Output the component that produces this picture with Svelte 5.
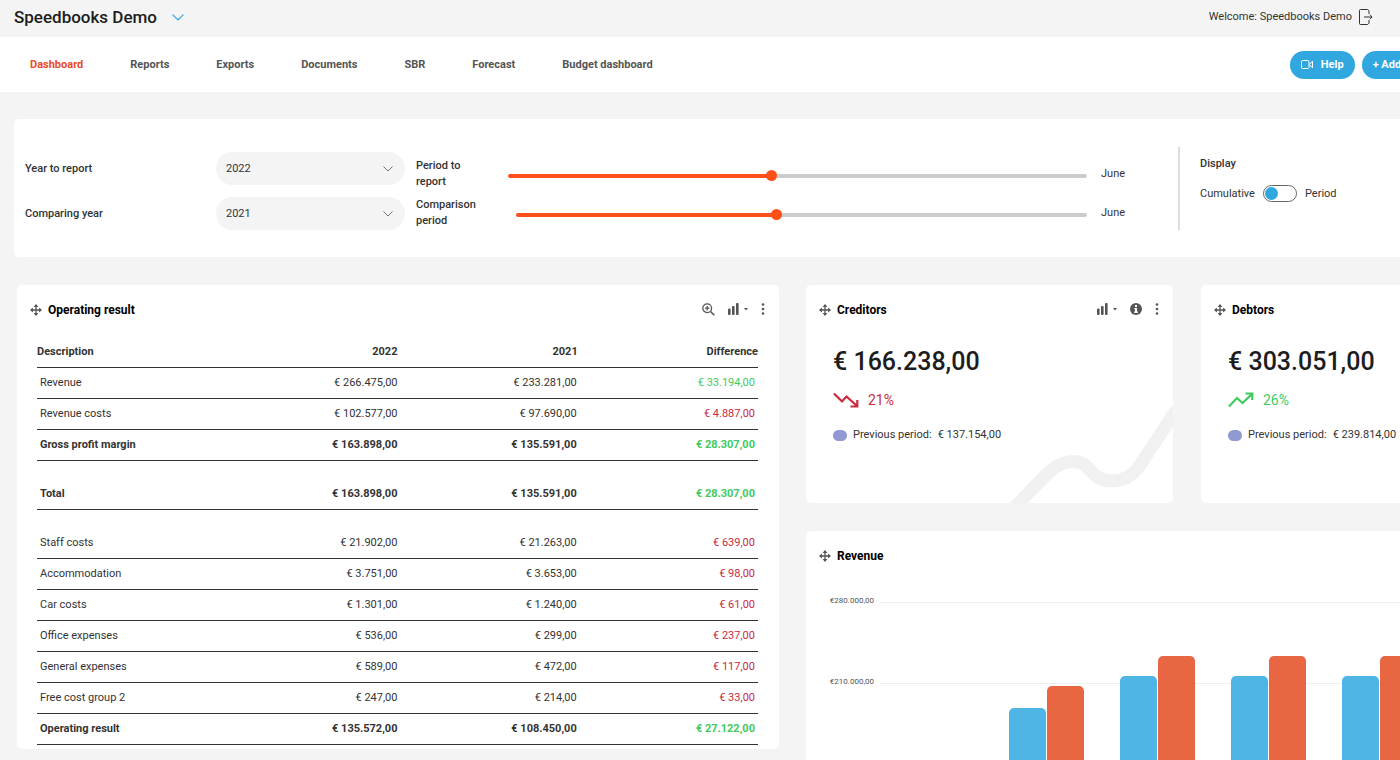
<script>
  let yearToReport = $state('2022');
  let comparingYear = $state('2021');
  let showPeriod = $state(false);

  const navItems = ['Dashboard', 'Reports', 'Exports', 'Documents', 'SBR', 'Forecast', 'Budget dashboard'];
  const years = ['2022', '2021', '2020', '2019'];
  const months = ['January', 'February', 'March', 'April', 'May', 'June', 'July', 'August', 'September', 'October', 'November', 'December'];

  let periods = $state([
    { id: 'report-period', label: 'Period to report', month: 6 },
    { id: 'comparison-period', label: 'Comparison period', month: 6 },
  ]);

  // gap: adds white space above the row
  const rows = [
    { name: 'Revenue', current: '266.475,00', previous: '233.281,00', diff: '33.194,00', good: true },
    { name: 'Revenue costs', current: '102.577,00', previous: '97.690,00', diff: '4.887,00' },
    { name: 'Gross profit margin', current: '163.898,00', previous: '135.591,00', diff: '28.307,00', good: true, bold: true },
    { name: 'Total', current: '163.898,00', previous: '135.591,00', diff: '28.307,00', good: true, bold: true, gap: true },
    { name: 'Staff costs', current: '21.902,00', previous: '21.263,00', diff: '639,00', gap: true },
    { name: 'Accommodation', current: '3.751,00', previous: '3.653,00', diff: '98,00' },
    { name: 'Car costs', current: '1.301,00', previous: '1.240,00', diff: '61,00' },
    { name: 'Office expenses', current: '536,00', previous: '299,00', diff: '237,00' },
    { name: 'General expenses', current: '589,00', previous: '472,00', diff: '117,00' },
    { name: 'Free cost group 2', current: '247,00', previous: '214,00', diff: '33,00' },
    { name: 'Operating result', current: '135.572,00', previous: '108.450,00', diff: '27.122,00', good: true, bold: true },
  ];

  const totals = [
    { title: 'Creditors', amount: '166.238,00', percent: 21, up: false, previous: '137.154,00' },
    { title: 'Debtors', amount: '303.051,00', percent: 26, up: true, previous: '239.814,00' },
  ];

  // Revenue chart, values in thousands
  const chartMax = 280;
  const ticks = ['€280.000,00', '€210.000,00', '€140.000,00', '€70.000,00'];
  const revenue = [
    { previous: 0, current: 0 },
    { previous: 188, current: 207 },
    { previous: 216, current: 233 },
    { previous: 216, current: 233 },
    { previous: 216, current: 233 },
    { previous: 216, current: 233 },
  ];
</script>

{#snippet moveIcon()}
  <svg class="move" width="12" height="12" viewBox="0 0 12 12" aria-hidden="true">
    <path d="M6 1.5v9M1.5 6h9" stroke="currentColor" stroke-width="1.3" />
    <path d="M6 0l2.4 2.9H3.600zM6 12l2.400-2.900H3.600zM0 6l2.900-2.400v4.800zM12 6L9.100 3.600v4.800z" fill="currentColor" />
  </svg>
{/snippet}

{#snippet chartButton()}
  <button class="icon chart-type" aria-label="Chart type">
    <svg width="20" height="12" viewBox="0 0 20 12" fill="currentColor">
      <rect x="0" y="5.5" width="2.600" height="6.5" rx="1" />
      <rect x="4" y="3" width="2.600" height="9" rx="1" />
      <rect x="8" y="0" width="2.600" height="12" rx="1" />
      <path d="M16 5h4l-2 2.4z" />
    </svg>
  </button>
{/snippet}

{#snippet menuButton()}
  <button class="icon" aria-label="More options">
    <svg width="4" height="12" viewBox="0 0 4 12" fill="currentColor">
      <circle cx="2" cy="1.5" r="1.3" />
      <circle cx="2" cy="6" r="1.3" />
      <circle cx="2" cy="10.5" r="1.3" />
    </svg>
  </button>
{/snippet}

<div class="app">
  <header class="topbar">
    <h1>Speedbooks Demo</h1>
    <button class="icon switch-company" aria-label="Switch company">
      <svg width="12" height="7" viewBox="0 0 12 7"><path d="M.6.6L6 6 11.4.6" fill="none" stroke="currentColor" stroke-width="1.2" /></svg>
    </button>
    <span class="welcome">Welcome: Speedbooks Demo</span>
    <button class="icon logout" aria-label="Log out">
      <svg width="14" height="16" viewBox="0 0 14 16" fill="none" stroke="currentColor">
        <path d="M10 5V1.8L8.7.5H1.5a1 1 0 0 0-1 1v13a1 1 0 0 0 1 1h7.2l1.3-1.3V11" />
        <path d="M5 8h8M10.8 5.7L13.1 8l-2.3 2.3" />
      </svg>
    </button>
  </header>

  <div class="page">
    <nav>
      {#each navItems as item, i}
        <a href="#{item}" class:active={i === 0}>{item}</a>
      {/each}
      <div class="actions">
        <button class="pill">
          <svg width="12" height="9" viewBox="0 0 12 9" fill="none" stroke="currentColor">
            <rect x=".5" y=".5" width="7.5" height="8" rx="1.2" />
            <path d="M8.5 4.5l3-3.3v6.6z" stroke-linejoin="round" />
          </svg>
          Help
        </button>
        <button class="pill add">+ Add widget</button>
      </div>
    </nav>

    <section class="filters">
      <div class="years">
        <label for="year">Year to report</label>
        <div class="select">
          <select id="year" bind:value={yearToReport}>
            {#each years as year}<option>{year}</option>{/each}
          </select>
          <svg width="10" height="6" viewBox="0 0 10 6"><path d="M.5.5L5 5 9.5.5" fill="none" stroke="currentColor" /></svg>
        </div>
        <label for="comparing">Comparing year</label>
        <div class="select">
          <select id="comparing" bind:value={comparingYear}>
            {#each years as year}<option>{year}</option>{/each}
          </select>
          <svg width="10" height="6" viewBox="0 0 10 6"><path d="M.5.5L5 5 9.5.5" fill="none" stroke="currentColor" /></svg>
        </div>
      </div>

      <div class="periods">
        {#each periods as period}
          <div class="period">
            <label for={period.id}>{period.label}</label>
            <input
              id={period.id}
              type="range"
              min="1"
              max="12"
              bind:value={period.month}
              style="--fill: {((period.month - 1) / 11) * 100}%"
            />
            <output for={period.id}>{months[period.month - 1]}</output>
          </div>
        {/each}
      </div>

      <div class="display">
        <h2>Display</h2>
        <label class="toggle">
          Cumulative
          <input type="checkbox" bind:checked={showPeriod} />
          Period
        </label>
      </div>
    </section>

    <main>
      <section class="card operating">
        <div class="card-head">
          {@render moveIcon()}
          <h2>Operating result</h2>
          <div class="tools">
            <button class="icon" aria-label="Zoom in">
              <svg width="13" height="13" viewBox="0 0 13 13" fill="none" stroke="currentColor">
                <circle cx="5.2" cy="5.2" r="4.4" stroke-width="1.3" />
                <path d="M8.5 8.5l3.8 3.8" stroke-width="1.6" />
                <path d="M5.2 3v4.4M3 5.2h4.4" stroke-width="1.3" />
              </svg>
            </button>
            {@render chartButton()}
            {@render menuButton()}
          </div>
        </div>
        <table>
          <thead>
            <tr><th>Description</th><th>2022</th><th>2021</th><th>Difference</th></tr>
          </thead>
          <tbody>
            {#each rows as row}
              <tr class:bold={row.bold} class:gap={row.gap}>
                <td>{row.name}</td>
                <td>€ {row.current}</td>
                <td>€ {row.previous}</td>
                <td class={row.good ? 'good' : 'bad'}>€ {row.diff}</td>
              </tr>
            {/each}
          </tbody>
        </table>
      </section>

      <div class="column">
        <div class="totals">
          {#each totals as total}
            <section class="card total">
              <div class="card-head">
                {@render moveIcon()}
                <h2>{total.title}</h2>
                <div class="tools">
                  {@render chartButton()}
                  <button class="icon" aria-label="Information">
                    <svg width="12" height="12" viewBox="0 0 12 12">
                      <circle cx="6" cy="6" r="6" fill="currentColor" />
                      <path d="M5 2h2v2H5zM4.3 5H7v3.6h.8V10H4.2V8.6H5V6.2h-.7z" fill="#fff" />
                    </svg>
                  </button>
                  {@render menuButton()}
                </div>
              </div>
              <div class="total-body">
                <p class="amount">€ {total.amount}</p>
                <p class="trend" class:good={total.up} class:bad={!total.up}>
                  <svg width="26" height="16" viewBox="0 0 26 16" fill="none" stroke="currentColor" stroke-width="2.2">
                    {#if total.up}
                      <path d="M1 14.5L9 6l5.5 5L24 2M17.5 1.5h6.8V8" />
                    {:else}
                      <path d="M1 1.5L9 9.5l4.5-5L24 14M17.5 14.5h6.8V8" />
                    {/if}
                  </svg>
                  {total.percent}%
                </p>
                <p class="previous"><i class="dot"></i>Previous period: <span>€ {total.previous}</span></p>
              </div>
              <svg class="curve" width="168" height="108" viewBox="0 0 168 108" aria-hidden="true">
                <path d="M8 114L43 78C52 69 60 66.500 69 66.500 87 66.500 84 86 107 86 120 86 129 79 135 70L172 14" fill="none" stroke="#f1f1f1" stroke-width="13" />
              </svg>
            </section>
          {/each}
        </div>

        <section class="card">
          <div class="card-head">
            {@render moveIcon()}
            <h2>Revenue</h2>
          </div>
          <div class="chart">
            <div class="axis">
              {#each ticks as tick}<span>{tick}</span>{/each}
            </div>
            <div class="plot">
              {#each revenue as month}
                <div class="group">
                  <div class="bar blue" style="height: {(month.previous / chartMax) * 100}%"></div>
                  <div class="bar orange" style="height: {(month.current / chartMax) * 100}%"></div>
                </div>
              {/each}
            </div>
          </div>
        </section>
      </div>
    </main>
  </div>
</div>

<style>
  :global(body) {
    background: #f4f4f4;
  }

  .app {
    height: 100vh;
    overflow: hidden;
    background: #f4f4f4;
    color: #333;
    font-family: Roboto, "Liberation Sans", sans-serif;
    font-size: 11px;
    line-height: 16px;
  }

  h1, h2, p {
    margin: 0;
  }

  button, select {
    font: inherit;
    color: inherit;
    cursor: pointer;
  }

  .icon {
    display: flex;
    padding: 0;
    border: none;
    background: none;
    color: #555;
  }

  .topbar {
    display: flex;
    align-items: center;
    height: 37px;
    padding: 0 27px 3px 14px;
    box-sizing: border-box;
  }

  h1 {
    color: #1d1d1d;
    font-size: 17px;
    font-weight: 500;
    line-height: 24px;
  }

  .switch-company {
    margin-left: 15px;
    color: #30a8df;
  }

  .welcome {
    margin-left: auto;
  }

  .logout {
    margin-left: 7px;
    color: #333;
  }

  /* the board is wider than the window */
  .page {
    width: calc(100% + 185px);
  }

  nav {
    display: flex;
    align-items: center;
    gap: 47px;
    height: 55px;
    padding-left: 30px;
    background: #fff;
  }

  nav a {
    color: #555;
    font-weight: 700;
    text-decoration: none;
  }

  nav a.active {
    color: #ea4b27;
  }

  .actions {
    display: flex;
    gap: 7px;
    margin-left: auto;
    padding-right: 137px;
  }

  .pill {
    display: flex;
    align-items: center;
    gap: 8px;
    height: 28px;
    padding: 0 11px;
    border: none;
    border-radius: 14px;
    background: #30a8df;
    color: #fff;
    font-weight: 700;
    white-space: nowrap;
  }

  .filters {
    display: flex;
    margin: 27px 14px 0;
    padding: 28px 11px 27px;
    border-radius: 5px;
    background: #fff;
  }

  .filters label, .filters h2 {
    font-size: 11px;
    font-weight: 500;
  }

  .years {
    display: grid;
    grid-template-columns: 191px 189px;
    grid-auto-rows: 33px;
    row-gap: 12px;
    align-items: center;
    padding-top: 5px;
  }

  .select {
    position: relative;
  }

  select {
    width: 100%;
    height: 33px;
    padding: 0 10px;
    border: none;
    border-radius: 17px;
    background: #f4f4f4;
    appearance: none;
  }

  .select svg {
    position: absolute;
    top: 14px;
    right: 12px;
    color: #777;
    pointer-events: none;
  }

  .periods {
    display: flex;
    flex: 1;
    flex-direction: column;
    gap: 7px;
    padding: 11px 52px 0 11px;
  }

  .period {
    display: flex;
    align-items: center;
  }

  .period label {
    width: 62px;
    margin-right: 30px;
  }

  .period:last-child label {
    margin-right: 38px;
  }

  .period output {
    width: 25px;
    margin-left: 14px;
  }

  input[type="range"] {
    flex: 1;
    height: 11px;
    margin: 3px 0 0;
    background: none;
    appearance: none;
  }

  input[type="range"]::-webkit-slider-runnable-track {
    height: 4px;
    border-radius: 2px;
    background: linear-gradient(to right, #ff5019 var(--fill), #ccc var(--fill));
  }

  input[type="range"]::-webkit-slider-thumb {
    width: 11px;
    height: 11px;
    margin-top: -4px;
    border-radius: 50%;
    background: #ff5019;
    appearance: none;
  }

  .display {
    width: 360px;
    padding: 9px 0 0 20px;
    border-left: 2px solid #ddd;
  }

  .filters .toggle {
    display: flex;
    align-items: center;
    gap: 8px;
    margin-top: 13px;
    font-weight: 400;
  }

  .toggle input {
    width: 34px;
    height: 17px;
    margin: 0;
    padding: 1px;
    border: 1px solid #666;
    border-radius: 9px;
    box-sizing: border-box;
    appearance: none;
  }

  .toggle input::before {
    content: "";
    display: block;
    width: 13px;
    height: 13px;
    border-radius: 50%;
    background: #30a8df;
  }

  .toggle input:checked::before {
    margin-left: auto;
  }

  main {
    display: flex;
    align-items: flex-start;
    gap: 27px;
    padding: 28px 17px;
  }

  .card {
    position: relative;
    border-radius: 5px;
    background: #fff;
    overflow: hidden;
  }

  .operating, .column {
    flex: 1;
    min-width: 0;
  }

  .column {
    display: flex;
    flex-direction: column;
    gap: 28px;
  }

  .card-head {
    display: flex;
    align-items: center;
    gap: 6px;
    padding: 17px 13px 0;
  }

  .move {
    color: #555;
  }

  .card h2 {
    color: #000;
    font-size: 12px;
    font-weight: 700;
  }

  .tools {
    display: flex;
    align-items: center;
    gap: 13px;
    margin-left: auto;
    padding: 0 1px 2px 0;
  }

  table {
    width: calc(100% - 41px);
    margin: 19px 20px 4px;
    border-collapse: collapse;
    table-layout: fixed;
  }

  th, td {
    height: 30px;
    padding: 0;
    border-bottom: 1px solid #333;
    text-align: right;
  }

  th {
    font-weight: 700;
  }

  th:first-child, td:first-child {
    text-align: left;
  }

  td:first-child {
    padding-left: 3px;
  }

  td:nth-child(3) {
    padding-right: 1px;
  }

  td:last-child {
    padding-right: 3px;
  }

  .gap td {
    padding-top: 18px;
  }

  .bold {
    font-weight: 700;
  }

  .good {
    color: #3fca5e;
  }

  .bad {
    color: #cb2a3c;
  }

  .totals {
    display: flex;
    gap: 28px;
  }

  .total {
    flex: 1;
    height: 218px;
  }

  .total-body {
    padding: 26px 27px 0;
  }

  .amount {
    color: #1d1d1d;
    font-size: 25px;
    font-weight: 500;
    line-height: 36px;
  }

  .trend {
    display: flex;
    align-items: center;
    gap: 9px;
    margin-top: 12px;
    font-size: 14px;
  }

  .previous {
    display: flex;
    align-items: center;
    gap: 6px;
    margin-top: 19px;
  }

  .dot {
    width: 14px;
    height: 11px;
    border-radius: 6px;
    background: #9199d2;
  }

  .curve {
    position: absolute;
    right: 0;
    bottom: 0;
  }

  .chart {
    display: flex;
    gap: 6px;
    padding: 31px 22px 40px 26px;
  }

  .axis {
    display: flex;
    flex-direction: column;
    width: 42px;
    color: #555;
    font-size: 8px;
    line-height: 11px;
  }

  .axis span {
    display: flex;
    justify-content: flex-end;
    height: 81px;
  }

  .plot {
    display: flex;
    flex: 1;
    height: 324px;
    margin-top: 7px;
    background: repeating-linear-gradient(to bottom, #eee 0 1px, transparent 1px 81px);
  }

  .group {
    display: flex;
    flex: 1;
    align-items: flex-end;
    justify-content: center;
    gap: 1px;
  }

  .bar {
    width: 37px;
    border-radius: 5px 5px 0 0;
    opacity: 0.85;
  }

  .blue {
    background: #30a8df;
  }

  .orange {
    background: #e44b20;
  }
</style>
